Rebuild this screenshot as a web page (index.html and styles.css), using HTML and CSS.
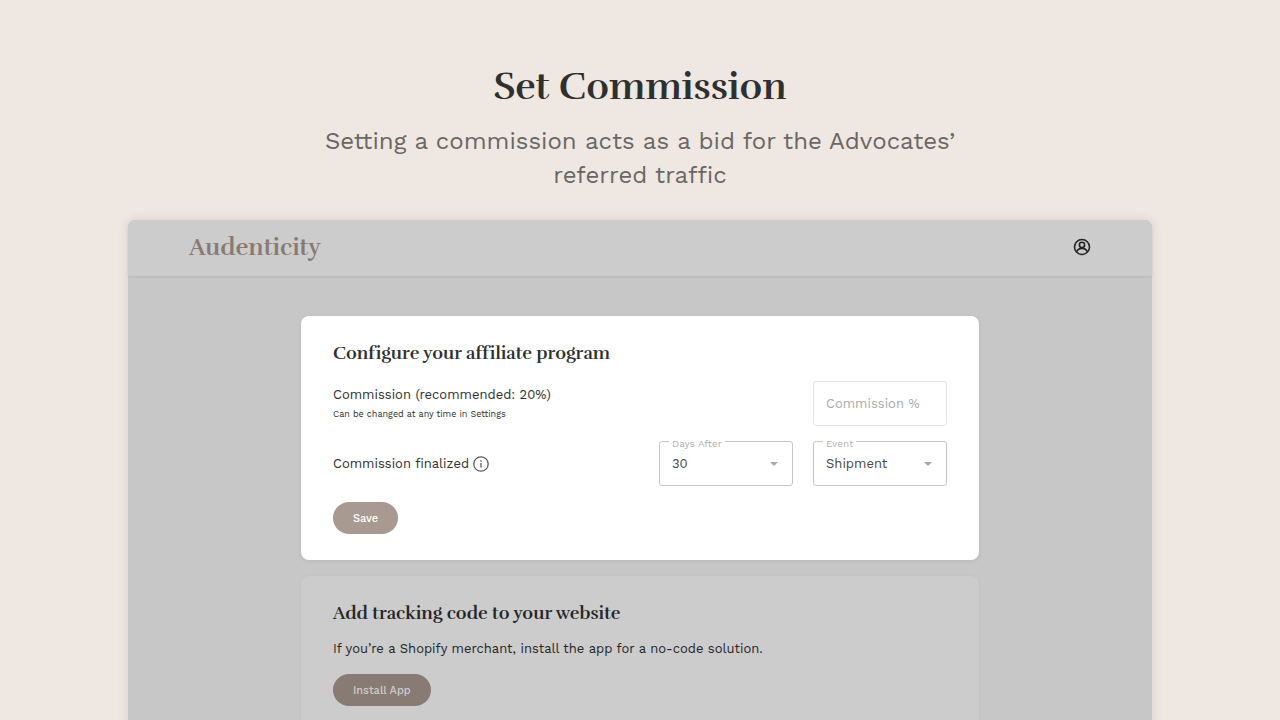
FILE: index.html
```html
<!DOCTYPE html>
<html lang="en">
<head>
<meta charset="utf-8">
<meta name="viewport" content="width=device-width, initial-scale=1">
<title>Set Commission</title>
<link rel="stylesheet" href="styles.css">
</head>
<body>
<main class="page">
  <header class="hero">
    <h1 class="hero-title">Set Commission</h1>
    <p class="hero-text">Setting a commission acts as a bid for the Advocates’ referred traffic</p>
  </header>
  <section class="window">
    <div class="topbar">
      <span class="logo">Audenticity</span>
      <button class="account" type="button" aria-label="Account">
        <svg viewBox="0 0 18 18" width="18" height="18" fill="none" stroke="currentColor" stroke-width="1.6">
          <circle cx="9" cy="9" r="7.500"/>
          <circle cx="9" cy="6.900" r="2.600"/>
          <path d="M3.500 13.900C4.600 11.500 6.500 10.400 9 10.400s4.400 1.100 5.500 3.500"/>
        </svg>
      </button>
    </div>
    <div class="content">
      <form class="card">
        <h2 class="card-title">Configure your affiliate program</h2>
        <div class="row row-first">
          <div class="row-text">
            <label class="label" for="commission">Commission (recommended: 20%)</label>
            <small class="hint">Can be changed at any time in Settings</small>
          </div>
          <input class="control input" id="commission" type="text" placeholder="Commission %">
        </div>
        <div class="row row-second">
          <div class="finalized">
            <span class="label">Commission finalized</span>
            <svg class="info" viewBox="0 0 16 16" width="16" height="16" fill="none" stroke="currentColor" stroke-width="1.3">
              <circle cx="8" cy="8" r="7.2"/>
              <path d="M8 7v4.500M8 4.300v1.400"/>
            </svg>
          </div>
          <div class="selects">
            <div class="field">
              <label class="float" for="days">Days After</label>
              <select class="control select" id="days"><option>30</option></select>
              <svg class="caret" viewBox="0 0 8 4" width="8" height="4"><path d="M0 0h8L4 4z" fill="currentColor"/></svg>
            </div>
            <div class="field">
              <label class="float" for="event">Event</label>
              <select class="control select" id="event"><option>Shipment</option></select>
              <svg class="caret" viewBox="0 0 8 4" width="8" height="4"><path d="M0 0h8L4 4z" fill="currentColor"/></svg>
            </div>
          </div>
        </div>
        <button class="button" type="button">Save</button>
      </form>
      <section class="card card-dim">
        <h2 class="card-title">Add tracking code to your website</h2>
        <p class="label card-text">If you’re a Shopify merchant, install the app for a no-code solution.</p>
        <button class="button button-dim" type="button">Install App</button>
      </section>
    </div>
  </section>
</main>
</body>
</html>
```
FILE: styles.css
```css
* { box-sizing: border-box; }
body {
  margin: 0;
  background: #eee7e2;
  color: #2e302f;
  font-family: "Work Sans", Inter, "Liberation Sans", sans-serif;
}
h1, h2, p { margin: 0; }
button, input, select { font-family: inherit; }
.page {
  height: 100vh;
  overflow: hidden;
  display: flex;
  flex-direction: column;
  align-items: center;
}
.hero {
  width: 54%;
  padding: 61px 0 28px;
  text-align: center;
}
.hero-title {
  font: bold 38px/52px Rufina, "Liberation Serif", serif;
}
.hero-text {
  margin-top: 11px;
  font-size: 24px;
  line-height: 34px;
  color: #696765;
}
.window {
  width: 80%;
  flex: 1 0 auto;
  background: #c7c7c7;
  border-radius: 8px 8px 0 0;
  box-shadow: 0 0 12px rgba(80, 60, 20, 0.12);
}
.topbar {
  display: flex;
  justify-content: space-between;
  align-items: center;
  height: 56px;
  padding: 0 61px 2px;
  background: #ccc;
  border-radius: 8px 8px 0 0;
  box-shadow: 0 1px 3px rgba(0, 0, 0, 0.08);
}
.logo {
  font: bold 24px/40px Rufina, "Liberation Serif", serif;
  color: #887a72;
}
.account {
  display: flex;
  padding: 0;
  border: 0;
  background: none;
  color: #252525;
}
.content {
  width: 678px;
  max-width: 100%;
  margin: 0 auto;
  padding-top: 40px;
}
.card {
  padding: 23px 32px 26px;
  margin-bottom: 16px;
  background: #fff;
  border-radius: 8px;
  box-shadow: 0 1px 4px rgba(0, 0, 0, 0.08);
}
.card-dim {
  background: #ccc;
  color: #252626;
  box-shadow: 0 0 4px rgba(0, 0, 0, 0.03);
}
.card-title {
  font: bold 18px/28px Rufina, "Liberation Serif", serif;
}
.row {
  display: flex;
  justify-content: space-between;
}
.row-first { margin-top: 14px; }
.row-second {
  margin: 15px 0 16px;
  align-items: center;
}
.row-text {
  display: flex;
  flex-direction: column;
  padding-top: 4px;
}
.label {
  font-size: 13px;
  line-height: 20px;
}
.hint {
  font-size: 9px;
  line-height: 18px;
}
.finalized {
  display: flex;
  align-items: center;
  gap: 4px;
}
.info { color: #5c5c5c; }
.selects {
  display: flex;
  gap: 20px;
}
.field { position: relative; }
.control {
  width: 134px;
  height: 45px;
  padding: 0 12px;
  border: 1px solid #e4e4e4;
  border-radius: 3px;
  background: #fff;
  font-size: 13px;
  color: #484848;
}
.input::placeholder { color: #aaa; }
.select {
  display: block;
  appearance: none;
  border-color: #c6c6c6;
}
.float {
  position: absolute;
  top: -3px;
  left: 10px;
  padding: 0 3px;
  background: #fff;
  font-size: 10px;
  line-height: 12px;
  color: #b0b0b0;
}
.caret {
  position: absolute;
  top: 21px;
  right: 15px;
  color: #aaa;
  pointer-events: none;
}
.button {
  display: block;
  height: 32px;
  padding: 0 20px;
  border: 0;
  border-radius: 16px;
  background: #a99a91;
  color: #fff;
  font-size: 11px;
  font-weight: 500;
}
.card-text { margin: 12px 0 15px; }
.button-dim {
  background: #887b74;
  color: #ccc;
}
```
